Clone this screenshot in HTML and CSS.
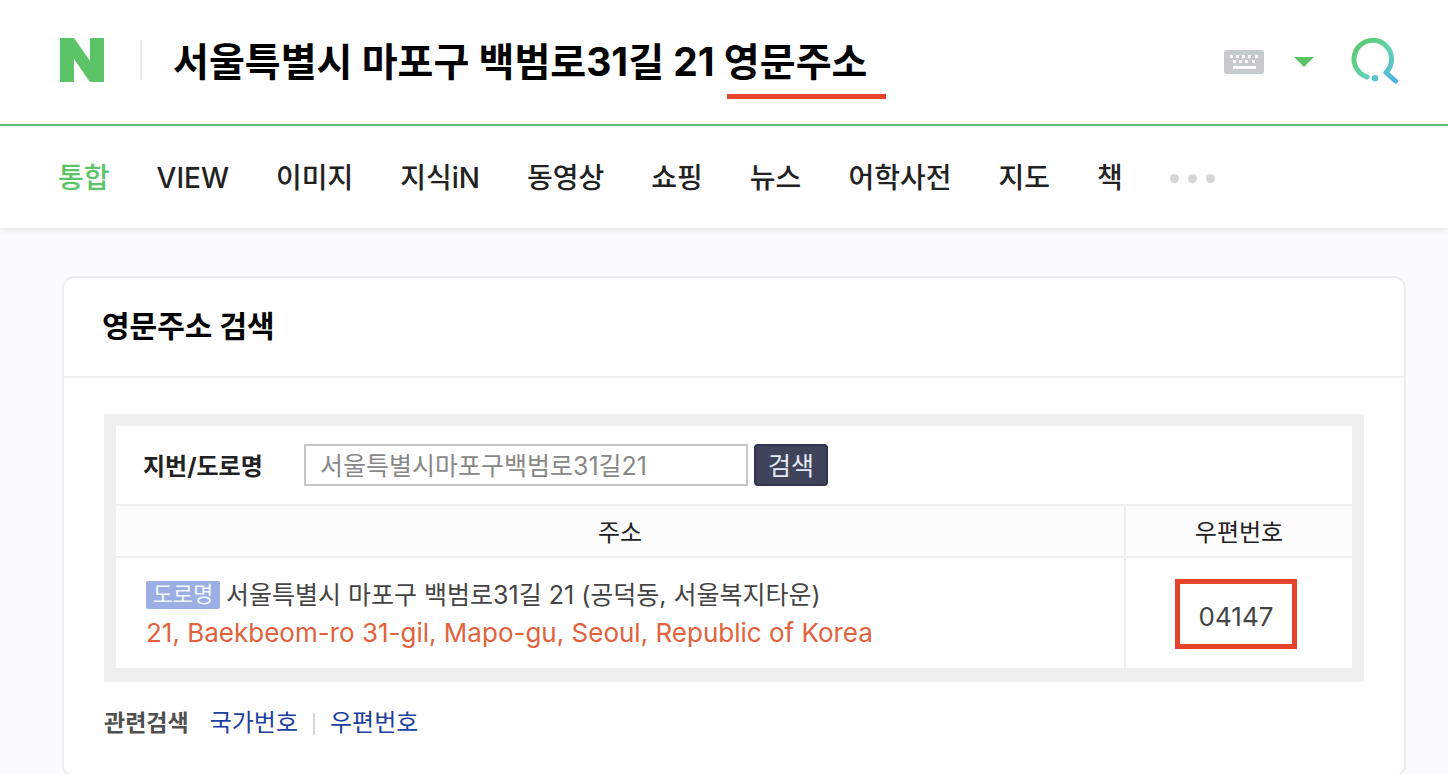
FILE: index.html
```
<!DOCTYPE html>
<html lang="ko">
<head>
    <meta charset="UTF-8">
    <meta name="viewport" content="width=device-width, initial-scale=1.0">
    <title>서울특별시 마포구 백범로31길 21 영문주소</title>
    <link rel="stylesheet" href="styles.css">
</head>
<body>

    <!-- 검색창 -->
    <header class="header">
        <a href="#" class="logo" aria-label="홈">
            <svg width="44" height="44" viewBox="0 0 44 44"><path fill="#5ac467" d="M0 0h14l16 23V0h14v44H30L14 21v23H0z"/></svg>
        </a>
        <form class="search-form">
            <div class="search-box">
                <input type="text" class="search-input" aria-label="검색어" value="서울특별시 마포구 백범로31길 21 영문주소">
                <span class="underline"></span>
            </div>
            <button type="button" class="icon-button keyboard" aria-label="한글 입력기">
                <svg width="40" height="24" viewBox="0 0 40 24">
                    <rect width="40" height="24" rx="3" fill="#c5cacd"/>
                    <path fill="#fff" d="M6 5h3v3H6zM12 5h3v3h-3zM18 5h3v3h-3zM24 5h3v3h-3zM31 5h3v3h-3zM9 10h3v3H9zM15 10h3v3h-3zM21 10h3v3h-3zM28 10h3v3h-3zM9 16h23v3H9z"/>
                </svg>
            </button>
            <button type="button" class="icon-button arrow" aria-label="자동완성 펼치기">
                <svg width="20" height="10" viewBox="0 0 20 10"><path fill="#5ac467" d="M0 0h20L10 10z"/></svg>
            </button>
            <button type="submit" class="icon-button" aria-label="검색">
                <svg width="48" height="48" viewBox="0 0 48 48" fill="none">
                    <defs>
                        <linearGradient id="search-color" gradientUnits="userSpaceOnUse" x1="8" y1="6" x2="45" y2="44">
                            <stop offset="0" stop-color="#5dc970"/>
                            <stop offset="0.5" stop-color="#62d2ae"/>
                            <stop offset="1" stop-color="#4fb2e2"/>
                        </linearGradient>
                    </defs>
                    <path stroke="url(#search-color)" stroke-width="5" stroke-linecap="round" stroke-linejoin="round" d="M16 41A18.800 18.800 0 1 1 35 36.500L44.500 45"/>
                    <circle cx="24" cy="42.300" r="3.200" fill="#57c6cf"/>
                </svg>
            </button>
        </form>
    </header>

    <!-- 탭 메뉴 -->
    <nav class="tabs">
        <a href="#" class="active">통합</a>
        <a href="#">VIEW</a>
        <a href="#">이미지</a>
        <a href="#">지식iN</a>
        <a href="#">동영상</a>
        <a href="#">쇼핑</a>
        <a href="#">뉴스</a>
        <a href="#">어학사전</a>
        <a href="#">지도</a>
        <a href="#">책</a>
        <button type="button" class="more" aria-label="더보기"><i></i><i></i><i></i></button>
    </nav>

    <!-- 영문주소 검색 결과 -->
    <main class="card">
        <h2>영문주소 검색</h2>
        <div class="card-body">
            <div class="address-box">
                <form class="address-form">
                    <label for="address">지번/도로명</label>
                    <input type="text" id="address" value="서울특별시마포구백범로31길21">
                    <button type="submit">검색</button>
                </form>
                <table class="address-table">
                    <thead>
                        <tr>
                            <th scope="col">주소</th>
                            <th scope="col" class="zip">우편번호</th>
                        </tr>
                    </thead>
                    <tbody>
                        <tr>
                            <td>
                                <div class="road"><span class="badge">도로명</span>서울특별시 마포구 백범로31길 21 (공덕동, 서울복지타운)</div>
                                <div class="english">21, Baekbeom-ro 31-gil, Mapo-gu, Seoul, Republic of Korea</div>
                            </td>
                            <td class="zip"><span class="zip-code">04147</span></td>
                        </tr>
                    </tbody>
                </table>
            </div>
            <div class="related">
                <strong>관련검색</strong>
                <a href="#">국가번호</a>
                <a href="#">우편번호</a>
            </div>
        </div>
    </main>

</body>
</html>
```

FILE: styles.css
```
/* 기본 스타일 */
* {
    box-sizing: border-box;
}

body {
    margin: 0;
    background-color: #f9fbfd;
    color: #222;
    font-family: Inter, "Noto Sans CJK KR", sans-serif;
    font-size: 24px;
    line-height: 36px;
}

a {
    color: inherit;
    text-decoration: none;
}

button,
input {
    font-family: inherit;
}

svg {
    display: block;
}

/* 검색창 */
.header {
    display: flex;
    align-items: center;
    height: 126px;
    padding: 0 49px 4px 60px;
    background-color: #fff;
    border-bottom: 2px solid #67c37a;
}

.logo {
    padding-right: 36px;
    border-right: 2px solid #ececec;
    height: 40px;
    display: flex;
    align-items: center;
}

.search-form {
    display: flex;
    flex: 1;
    align-items: center;
}

.search-box {
    position: relative;
    flex: 1;
    margin-left: 31px;
}

.search-input {
    display: block;
    width: 100%;
    height: 60px;
    padding: 0 0 3px;
    border: none;
    outline: none;
    background: none;
    color: #000;
    font-size: 39px;
    font-weight: 700;
}

/* 검색어 밑줄 강조 */
.underline {
    position: absolute;
    left: 554px;
    bottom: -9px;
    width: 159px;
    height: 5px;
    background-color: #e5432a;
}

.icon-button {
    padding: 0;
    border: none;
    background: none;
    cursor: pointer;
}

.keyboard {
    margin-right: 30px;
    padding-top: 4px;
}

.arrow {
    margin-right: 37px;
    padding-top: 3px;
}

/* 탭 메뉴 */
.tabs {
    display: flex;
    align-items: center;
    gap: 47px;
    height: 102px;
    padding: 2px 58px 0;
    background-color: #fff;
    box-shadow: 0 1px 6px rgba(0, 0, 0, 0.12);
    font-size: 28px;
    font-weight: 500;
    white-space: nowrap;
}

.tabs .active {
    color: #5ac467;
}

.more {
    display: flex;
    gap: 9px;
    padding: 0;
    border: none;
    background: none;
    cursor: pointer;
}

.more i {
    width: 9px;
    height: 9px;
    border-radius: 50%;
    background-color: #d5d8d9;
}

/* 결과 카드 */
.card {
    margin: 48px 42px 0 62px;
    background-color: #fff;
    border: 2px solid #ebedee;
    border-radius: 12px;
}

.card h2 {
    margin: 0;
    padding: 29px 38px 31px;
    border-bottom: 2px solid #eef0f0;
    color: #000;
    font-size: 30px;
    font-weight: 700;
    line-height: 38px;
}

.card-body {
    padding: 36px 40px 34px;
}

.address-box {
    border: 12px solid #efefef;
    border-bottom-width: 14px;
}

/* 주소 입력 */
.address-form {
    display: flex;
    align-items: center;
    height: 78px;
    padding-left: 27px;
}

.address-form label {
    width: 161px;
    padding-top: 3px;
    font-weight: 700;
}

.address-form input {
    width: 444px;
    height: 42px;
    padding: 0 14px 3px;
    border: 2px solid #c6c6c6;
    color: #888;
    font-size: 25px;
}

.address-form button {
    width: 74px;
    height: 42px;
    margin-left: 6px;
    padding: 0 0 3px;
    border: 2px solid #30334f;
    border-radius: 4px;
    background-color: #40445b;
    color: #e4ebf5;
    font-size: 25px;
    cursor: pointer;
}

/* 주소 표 */
.address-table {
    width: 100%;
    border-spacing: 0;
}

.address-table th {
    height: 54px;
    padding: 3px 0 0;
    border-top: 2px solid #efefef;
    border-bottom: 2px solid #efefef;
    background-color: #fcfcfc;
    font-weight: 400;
}

.address-table td {
    height: 110px;
    padding: 2px 30px 0;
    color: #444;
}

.address-table .zip {
    width: 228px;
    border-left: 2px solid #efefef;
    text-align: center;
}

.address-table td.zip {
    padding: 2px 6px 0 0;
}

.road {
    display: flex;
    align-items: center;
    height: 38px;
    font-size: 25px;
}

.badge {
    width: 74px;
    height: 28px;
    margin-right: 6px;
    border-radius: 2px;
    background-color: #9bafe5;
    color: #f1f6ff;
    font-size: 22px;
    line-height: 26px;
    text-align: center;
}

.english {
    color: #e2623e;
    font-size: 26px;
    line-height: 38px;
}

.zip-code {
    display: block;
    width: 122px;
    margin: 0 auto;
    padding-top: 6px;
    border: 5px solid #e5432a;
    font-size: 26px;
    line-height: 54px;
}

/* 관련검색 */
.related {
    display: flex;
    align-items: center;
    margin-top: 23px;
    color: #1d3f9f;
}

.related strong {
    margin-right: 21px;
    color: #505050;
    font-size: 23px;
}

.related a + a::before {
    content: "";
    display: inline-block;
    width: 2px;
    height: 22px;
    margin: 0 15px;
    background-color: #d8d8d8;
    vertical-align: middle;
}
```
